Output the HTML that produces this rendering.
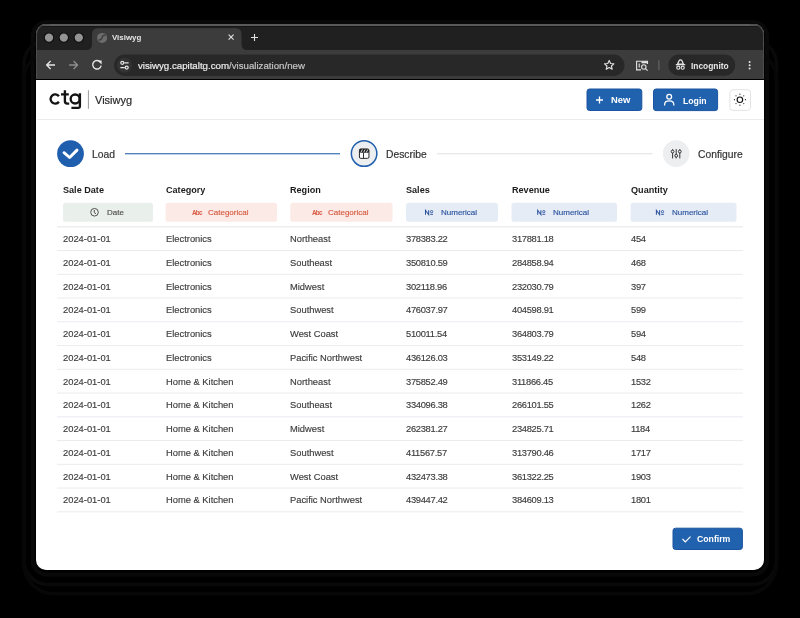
<!DOCTYPE html>
<html><head><meta charset="utf-8">
<style>
*{margin:0;padding:0;box-sizing:border-box}
html,body{width:800px;height:618px;background:#000;overflow:hidden;font-family:"Liberation Sans",sans-serif;position:relative}
body>div{will-change:transform}
.abs{position:absolute}
.ttl{position:absolute;left:112.1px;top:32.6px;font-size:7.9px;line-height:10px;font-weight:bold;color:#e6e6e6;white-space:nowrap}
.url{position:absolute;left:137.9px;top:59.9px;font-size:9.7px;line-height:11px;color:#ececec;white-space:nowrap;-webkit-text-stroke:0.2px currentColor}
.url span{color:#c4c4c4}
.inct{position:absolute;left:690.6px;top:60.5px;font-size:8.4px;line-height:10px;font-weight:bold;color:#e6e6e6;white-space:nowrap}
.hdrsep{position:absolute;left:36px;top:119px;width:728px;height:1px;background:#e8e8e8}
.logo{position:absolute;left:49px;top:85.7px;font-size:19.6px;line-height:22px;font-weight:bold;color:#141414;letter-spacing:0.7px;transform:scaleX(1.07);transform-origin:0 0}
.lsep{position:absolute;left:88px;top:90.2px;width:1px;height:18.6px;background:#9a9a9a}
.appname{position:absolute;left:95.2px;top:94.2px;font-size:11px;line-height:12px;color:#2a2a2a;-webkit-text-stroke:0.2px currentColor}
.btn{position:absolute;background:#1f5fad;border:1px solid #1a5298;border-radius:2.5px}
.btxt{position:absolute;font-size:8.9px;line-height:10px;font-weight:bold;color:#fff;white-space:nowrap}
.theme{position:absolute;left:729.4px;top:89.2px;width:21px;height:21.2px;border:1px solid #e4e4e4;border-radius:3px;background:#fff}
.stxt{position:absolute;top:148.8px;font-size:10.3px;line-height:12px;color:#333;white-space:nowrap;-webkit-text-stroke:0.2px currentColor}
.th{position:absolute;font-size:9.1px;line-height:11px;font-weight:bold;color:#1c1c1c;white-space:nowrap}
.badge{position:absolute;top:202.8px;height:19px;border-radius:2.5px;font-size:7.8px;line-height:19px;text-align:center;white-space:nowrap}
.badge .ico{font-size:7px;margin-right:8px}
.b0{background:#e9efea;color:#555}
.b1{background:#fbe9e5;color:#d6604a}
.b2{background:#e6ecf5;color:#2d56a0}
.hline{position:absolute;left:57px;width:686px;height:1px;background:#e9ecef}
.hline.dbl{background:#e3e5e8}
.cell{position:absolute;font-size:9.35px;line-height:11px;color:#3c3c3c;white-space:nowrap;-webkit-text-stroke:0.15px currentColor}
.btx{position:absolute;top:208px;font-size:8px;line-height:10px;white-space:nowrap;-webkit-text-stroke:0.15px currentColor}
.b0t{color:#4f4f4f}
.b1t{color:#d85a40}
.b2t{color:#2b54a0}
.ico1{position:absolute;top:208.9px;font-size:6.3px;line-height:7px;font-weight:bold;color:#d85a40;letter-spacing:-0.7px;white-space:nowrap;margin-left:0.8px}
.ico2{position:absolute;top:207.8px;font-size:8.6px;line-height:10px;color:#2b54a0;white-space:nowrap}

</style></head><body>
<svg class="abs" style="left:0;top:0" width="800" height="618" viewBox="0 0 800 618">
  <g fill="none" stroke="#090909">
    <rect x="32.7" y="22" width="734.3" height="552.5" rx="14" stroke-width="4"/>
    <rect x="24" y="40" width="752.5" height="544.5" rx="24" stroke-width="3.6"/>
    <rect x="24" y="50" width="752.5" height="543.7" rx="30" stroke-width="3.6" stroke="#070707"/>
  </g>
  <defs><clipPath id="wc"><rect x="36" y="24" width="728" height="546" rx="10" ry="10"/></clipPath></defs>
  <g clip-path="url(#wc)">
    <rect x="36" y="24" width="728" height="546" fill="#ffffff"/>
    <rect x="36" y="24" width="728" height="26" fill="#202020"/>
    <rect x="36" y="24" width="728" height="2" fill="#555555"/>
    <rect x="36" y="26" width="728" height="1" fill="#151515"/>
    <path d="M86 50 Q92 50 92 44 L92 34.3 Q92 28.3 98 28.3 L235.5 28.3 Q241.5 28.3 241.5 34.3 L241.5 44 Q241.5 50 247.5 50 Z" fill="#3c3c3c"/>
    <rect x="36" y="50" width="728" height="29" fill="#3c3c3c"/>
    <rect x="36" y="79" width="728" height="1" fill="#000"/>
  </g>
  <!-- traffic lights -->
  <clipPath id="topc"><rect x="0" y="0" width="800" height="79"/></clipPath><rect clip-path="url(#topc)" x="36.5" y="24.5" width="727" height="545" rx="10" fill="none" stroke="#4d4d4d" stroke-width="1"/>
  <rect x="50" y="24" width="700" height="2" fill="#5a5a5a"/>
  <g fill="#949494" stroke="#0e0e0e" stroke-width="1.1">
    <circle cx="49" cy="37.6" r="4.75"/>
    <circle cx="63.8" cy="37.6" r="4.75"/>
    <circle cx="78.8" cy="37.6" r="4.75"/>
  </g>
  <!-- favicon -->
  <circle cx="102.1" cy="37.9" r="5" fill="#6c6c6c"/>
  <path d="M105.6 35.3 Q102.6 34.9 102.2 37.3 Q101.9 39.6 98.6 40.3" stroke="#3d3d3d" stroke-width="1.4" fill="none"/>
  <!-- close x -->
  <path d="M228.6 34.6 L233.6 39.6 M233.6 34.6 L228.6 39.6" stroke="#e3e3e3" stroke-width="1.1"/>
  <!-- plus -->
  <path d="M254.5 34 L254.5 41 M251 37.5 L258 37.5" stroke="#e3e3e3" stroke-width="1.1"/>
  <!-- back/forward/reload -->
  <path d="M55 65 L46.8 65 M50.6 61.1 L46.7 65 L50.6 68.9" stroke="#e6e6e6" stroke-width="1.35" fill="none"/>
  <path d="M69.2 65 L77.4 65 M73.6 61.1 L77.5 65 L73.6 68.9" stroke="#8e8e8e" stroke-width="1.35" fill="none"/>
  <path d="M100.4 62.2 A4.25 4.25 0 1 0 101.15 65.6" stroke="#e6e6e6" stroke-width="1.35" fill="none"/>
  <path d="M97.6 60.4 L101.6 60.4 L101.6 64.4 Z" fill="#e6e6e6"/>
  <!-- address pill -->
  <rect x="114" y="54.5" width="510.5" height="21.5" rx="10.75" fill="#282828"/>
  <circle cx="124.5" cy="65.2" r="7.5" fill="#333333"/>
  <g stroke="#e6e6e6" stroke-width="1.25" fill="none">
    <circle cx="122.3" cy="62.8" r="1.5"/>
    <path d="M124.3 62.8 L128.6 62.8 M120.4 67.6 L124.7 67.6"/>
    <circle cx="126.7" cy="67.6" r="1.5"/>
  </g>
  <!-- star -->
  <path d="M609.2 60.4 L610.6 63.5 L613.9 63.8 L611.4 66 L612.2 69.3 L609.2 67.6 L606.2 69.3 L607 66 L604.5 63.8 L607.8 63.5 Z" stroke="#e3e3e3" stroke-width="1.1" fill="none" stroke-linejoin="round"/>
  <!-- tab search -->
  <g stroke="#e3e3e3" stroke-width="1.1" fill="none">
    <path d="M641 69.9 L636.6 69.9 L636.6 61.3 L647.5 61.3 L647.5 64"/>
    <path d="M639.2 63.5 L639.2 67.5"/>
    <circle cx="643.8" cy="67" r="2.2"/>
    <path d="M645.4 68.6 L647.6 70.6"/>
  </g>
  <rect x="641.5" y="61.3" width="6" height="2" fill="#e3e3e3"/>
  <rect x="658.4" y="60.3" width="1" height="9.7" fill="#6a6a6a"/>
  <!-- incognito pill -->
  <rect x="668.4" y="54.5" width="66.9" height="21.3" rx="10.6" fill="#282828"/>
  <path d="M677.6 64 L679.2 60.5 Q679.5 59.9 680.5 59.9 Q681.5 59.9 681.8 60.5 L683.4 64 Z" stroke="#e6e6e6" stroke-width="1.25" fill="none" stroke-linejoin="round"/>
  <rect x="675.7" y="64" width="9.6" height="1.25" rx="0.6" fill="#e6e6e6"/>
  <g stroke="#e6e6e6" stroke-width="1.1" fill="none">
    <circle cx="678.3" cy="67.7" r="1.55"/>
    <circle cx="682.7" cy="67.7" r="1.55"/>
  </g>
  <!-- menu dots -->
  <g fill="#e3e3e3">
    <circle cx="749.6" cy="61.9" r="1"/>
    <circle cx="749.6" cy="65.2" r="1"/>
    <circle cx="749.6" cy="68.5" r="1"/>
  </g>
</svg>
<div class="ttl">Visiwyg</div>
<div class="url">visiwyg.capitaltg.com<span>/visualization/new</span></div>
<div class="inct">Incognito</div>

<svg class="abs" style="left:0;top:0" width="800" height="618" viewBox="0 0 800 618">
  <rect x="37" y="119" width="727" height="1" fill="#eaecef"/>
  <rect x="87.9" y="90.2" width="1" height="18.6" fill="#9a9a9a"/>
  <g stroke="#141414" stroke-width="2.35" fill="none">
    <path d="M58.9 96.3 A4.6 4.6 0 1 0 58.9 101.7"/>
    <path d="M64.9 90.2 L64.9 101.3 Q64.9 103.6 67.2 103.6 L69.2 103.6 M61 94.3 L68.8 94.3"/>
    <circle cx="75.15" cy="98.95" r="4.5"/>
    <path d="M79.9 93.2 L79.9 106.6 Q79.9 107.8 78.7 107.8 L71.4 107.8"/>
  </g>
  <!-- New -->
  <rect x="587" y="89" width="54.8" height="21.5" rx="2.5" fill="#2162ae" stroke="#1a54a2" stroke-width="1"/>
  <path d="M599.5 96.5 L599.5 103.5 M596 100 L603 100" stroke="#fff" stroke-width="1.3"/>
  <!-- Login -->
  <rect x="653.5" y="89" width="64.1" height="21.6" rx="2.5" fill="#2162ae" stroke="#1a54a2" stroke-width="1"/>
  <circle cx="669.2" cy="96.7" r="2.4" stroke="#fff" stroke-width="1.3" fill="none"/>
  <path d="M664.6 105.6 L664.6 104.6 Q664.6 100.8 669.2 100.8 Q673.8 100.8 673.8 104.6 L673.8 105.6" stroke="#fff" stroke-width="1.3" fill="none"/>
  <!-- theme -->
  <rect x="729.9" y="89.7" width="20.6" height="20.6" rx="3" fill="#fff" stroke="#e3e3e3" stroke-width="1"/>
  <circle cx="739.9" cy="99.7" r="2.75" stroke="#111" stroke-width="1.15" fill="none"/>
  <g fill="#222"><circle cx="745.40" cy="99.70" r="0.6"/><circle cx="743.79" cy="103.59" r="0.6"/><circle cx="739.90" cy="105.20" r="0.6"/><circle cx="736.01" cy="103.59" r="0.6"/><circle cx="734.40" cy="99.70" r="0.6"/><circle cx="736.01" cy="95.81" r="0.6"/><circle cx="739.90" cy="94.20" r="0.6"/><circle cx="743.79" cy="95.81" r="0.6"/></g>
  <!-- stepper -->
  <rect x="125" y="153.2" width="215" height="1.1" fill="#2a63aa"/>
  <rect x="437" y="153.2" width="215.5" height="1.1" fill="#e3e3e3"/>
  <circle cx="70.5" cy="153.65" r="13.4" fill="#1f5fad"/>
  <path d="M64 152.7 L69.6 157.5 L77 150.1" stroke="#fff" stroke-width="2.9" fill="none" stroke-linecap="round" stroke-linejoin="round"/>
  <circle cx="364.1" cy="153.6" r="12.75" fill="#eceef0" stroke="#1f5fad" stroke-width="1.5"/>
  <rect x="359.45" y="148.95" width="9.5" height="9.4" rx="1.3" fill="#fff" stroke="#1e1e1e" stroke-width="0.95"/>
  <rect x="359.45" y="148.95" width="9.5" height="3.7" rx="1" fill="#1e1e1e"/>
  <path d="M360.9 152.4 L362.4 149.5 M363.6 152.4 L365.1 149.5 M366.3 152.4 L367.8 149.5" stroke="#fff" stroke-width="0.85"/>
  <path d="M363.5 152.5 L363.5 158.3" stroke="#1e1e1e" stroke-width="0.9"/>
  <circle cx="676.15" cy="153.65" r="13.3" fill="#eceef0"/>
  <g stroke="#333" stroke-width="1" fill="none">
    <path d="M672.6 149.1 L672.6 150.1 M672.6 153 L672.6 158.4 M676.2 149.1 L676.2 154.3 M676.2 157.2 L676.2 158.4 M679.8 149.1 L679.8 150.1 M679.8 153 L679.8 158.4"/>
    <circle cx="672.6" cy="151.55" r="1.4"/>
    <circle cx="676.2" cy="155.75" r="1.4"/>
    <circle cx="679.8" cy="151.55" r="1.4"/>
  </g>
  <!-- confirm -->
  <rect x="673" y="528.2" width="69.4" height="21.3" rx="2.5" fill="#2162ae" stroke="#1a54a2" stroke-width="1"/>
  <path d="M682.5 539 L685.3 541.8 L690.5 536.6" stroke="#fff" stroke-width="1.2" fill="none"/>
  <rect x="63.00" y="202.8" width="90.00" height="19" rx="2.5" fill="#e9efea"/>
<circle cx="94.50" cy="212.25" r="3.8" stroke="#4a4a4a" stroke-width="0.95" fill="none"/><path d="M94.30 210 L94.30 212.6 L96.00 213.8" stroke="#4a4a4a" stroke-width="0.95" fill="none"/>
<rect x="165.60" y="202.8" width="111.40" height="19" rx="2.5" fill="#fbeae6"/>
<rect x="290.30" y="202.8" width="102.20" height="19" rx="2.5" fill="#fbeae6"/>
<rect x="406.00" y="202.8" width="92.00" height="19" rx="2.5" fill="#e6ecf5"/>
<g stroke="#2b54a0" fill="none"><path d="M425.50 214.7 L425.50 210.3 L428.70 214.7 L428.70 210.3" stroke-width="1.05" stroke-linejoin="miter"/><circle cx="431.60" cy="211.65" r="1.15" stroke-width="0.9"/></g><rect x="430.15" y="213.85" width="2.9" height="0.9" fill="#2b54a0"/>
<rect x="511.50" y="202.8" width="105.50" height="19" rx="2.5" fill="#e6ecf5"/>
<g stroke="#2b54a0" fill="none"><path d="M537.70 214.7 L537.70 210.3 L540.90 214.7 L540.90 210.3" stroke-width="1.05" stroke-linejoin="miter"/><circle cx="543.80" cy="211.65" r="1.15" stroke-width="0.9"/></g><rect x="542.35" y="213.85" width="2.9" height="0.9" fill="#2b54a0"/>
<rect x="630.60" y="202.8" width="105.90" height="19" rx="2.5" fill="#e6ecf5"/>
<g stroke="#2b54a0" fill="none"><path d="M656.40 214.7 L656.40 210.3 L659.60 214.7 L659.60 210.3" stroke-width="1.05" stroke-linejoin="miter"/><circle cx="662.50" cy="211.65" r="1.15" stroke-width="0.9"/></g><rect x="661.05" y="213.85" width="2.9" height="0.9" fill="#2b54a0"/>
<rect x="57" y="226.30" width="686" height="1" fill="#e3e5e8"/>
<rect x="57" y="250.05" width="686" height="1" fill="#e9ecef"/>
<rect x="57" y="273.80" width="686" height="1" fill="#e9ecef"/>
<rect x="57" y="297.55" width="686" height="1" fill="#e9ecef"/>
<rect x="57" y="321.30" width="686" height="1" fill="#e9ecef"/>
<rect x="57" y="345.05" width="686" height="1" fill="#e9ecef"/>
<rect x="57" y="368.80" width="686" height="1" fill="#e9ecef"/>
<rect x="57" y="392.55" width="686" height="1" fill="#e9ecef"/>
<rect x="57" y="416.30" width="686" height="1" fill="#e9ecef"/>
<rect x="57" y="440.05" width="686" height="1" fill="#e9ecef"/>
<rect x="57" y="463.80" width="686" height="1" fill="#e9ecef"/>
<rect x="57" y="487.55" width="686" height="1" fill="#e9ecef"/>
<rect x="57" y="511.30" width="686" height="1" fill="#e9ecef"/>
</svg>
<div class="appname">Visiwyg</div>
<div class="btxt" style="left:610.8px;top:95.2px;font-size:9.4px">New</div>
<div class="btxt" style="left:682.9px;top:95.5px;font-size:8.7px">Login</div>
<div class="btxt" style="left:697.3px;top:534.2px;font-size:8.7px">Confirm</div>
<div class="stxt" style="left:92.1px">Load</div>
<div class="stxt" style="left:385.7px">Describe</div>
<div class="stxt" style="left:697.5px">Configure</div>

<div class="th" style="left:63.00px;top:185.1px">Sale Date</div>
<div class="th" style="left:165.60px;top:185.1px">Category</div>
<div class="th" style="left:290.30px;top:185.1px">Region</div>
<div class="th" style="left:406.00px;top:185.1px">Sales</div>
<div class="th" style="left:511.50px;top:185.1px">Revenue</div>
<div class="th" style="left:630.60px;top:185.1px">Quantity</div>
<div class="btx b0t" style="left:106.75px">Date</div>
<div class="ico1" style="left:191.00px">Abc</div>
<div class="btx b1t" style="left:207.90px">Categorical</div>
<div class="ico1" style="left:311.00px">Abc</div>
<div class="btx b1t" style="left:327.60px">Categorical</div>
<div class="btx b2t" style="left:440.80px">Numerical</div>
<div class="btx b2t" style="left:552.50px">Numerical</div>
<div class="btx b2t" style="left:671.90px">Numerical</div>
<div class="cell" style="left:63.00px;top:234.00px">2024-01-01</div>
<div class="cell" style="left:165.60px;top:234.00px">Electronics</div>
<div class="cell" style="left:290.30px;top:234.00px">Northeast</div>
<div class="cell" style="left:406.00px;top:234.00px;letter-spacing:-0.3px">378383.22</div>
<div class="cell" style="left:511.50px;top:234.00px;letter-spacing:-0.3px">317881.18</div>
<div class="cell" style="left:630.60px;top:234.00px;letter-spacing:-0.3px">454</div>
<div class="cell" style="left:63.00px;top:257.75px">2024-01-01</div>
<div class="cell" style="left:165.60px;top:257.75px">Electronics</div>
<div class="cell" style="left:290.30px;top:257.75px">Southeast</div>
<div class="cell" style="left:406.00px;top:257.75px;letter-spacing:-0.3px">350810.59</div>
<div class="cell" style="left:511.50px;top:257.75px;letter-spacing:-0.3px">284858.94</div>
<div class="cell" style="left:630.60px;top:257.75px;letter-spacing:-0.3px">468</div>
<div class="cell" style="left:63.00px;top:281.50px">2024-01-01</div>
<div class="cell" style="left:165.60px;top:281.50px">Electronics</div>
<div class="cell" style="left:290.30px;top:281.50px">Midwest</div>
<div class="cell" style="left:406.00px;top:281.50px;letter-spacing:-0.3px">302118.96</div>
<div class="cell" style="left:511.50px;top:281.50px;letter-spacing:-0.3px">232030.79</div>
<div class="cell" style="left:630.60px;top:281.50px;letter-spacing:-0.3px">397</div>
<div class="cell" style="left:63.00px;top:305.25px">2024-01-01</div>
<div class="cell" style="left:165.60px;top:305.25px">Electronics</div>
<div class="cell" style="left:290.30px;top:305.25px">Southwest</div>
<div class="cell" style="left:406.00px;top:305.25px;letter-spacing:-0.3px">476037.97</div>
<div class="cell" style="left:511.50px;top:305.25px;letter-spacing:-0.3px">404598.91</div>
<div class="cell" style="left:630.60px;top:305.25px;letter-spacing:-0.3px">599</div>
<div class="cell" style="left:63.00px;top:329.00px">2024-01-01</div>
<div class="cell" style="left:165.60px;top:329.00px">Electronics</div>
<div class="cell" style="left:290.30px;top:329.00px">West Coast</div>
<div class="cell" style="left:406.00px;top:329.00px;letter-spacing:-0.3px">510011.54</div>
<div class="cell" style="left:511.50px;top:329.00px;letter-spacing:-0.3px">364803.79</div>
<div class="cell" style="left:630.60px;top:329.00px;letter-spacing:-0.3px">594</div>
<div class="cell" style="left:63.00px;top:352.75px">2024-01-01</div>
<div class="cell" style="left:165.60px;top:352.75px">Electronics</div>
<div class="cell" style="left:290.30px;top:352.75px">Pacific Northwest</div>
<div class="cell" style="left:406.00px;top:352.75px;letter-spacing:-0.3px">436126.03</div>
<div class="cell" style="left:511.50px;top:352.75px;letter-spacing:-0.3px">353149.22</div>
<div class="cell" style="left:630.60px;top:352.75px;letter-spacing:-0.3px">548</div>
<div class="cell" style="left:63.00px;top:376.50px">2024-01-01</div>
<div class="cell" style="left:165.60px;top:376.50px">Home &amp; Kitchen</div>
<div class="cell" style="left:290.30px;top:376.50px">Northeast</div>
<div class="cell" style="left:406.00px;top:376.50px;letter-spacing:-0.3px">375852.49</div>
<div class="cell" style="left:511.50px;top:376.50px;letter-spacing:-0.3px">311866.45</div>
<div class="cell" style="left:630.60px;top:376.50px;letter-spacing:-0.3px">1532</div>
<div class="cell" style="left:63.00px;top:400.25px">2024-01-01</div>
<div class="cell" style="left:165.60px;top:400.25px">Home &amp; Kitchen</div>
<div class="cell" style="left:290.30px;top:400.25px">Southeast</div>
<div class="cell" style="left:406.00px;top:400.25px;letter-spacing:-0.3px">334096.38</div>
<div class="cell" style="left:511.50px;top:400.25px;letter-spacing:-0.3px">266101.55</div>
<div class="cell" style="left:630.60px;top:400.25px;letter-spacing:-0.3px">1262</div>
<div class="cell" style="left:63.00px;top:424.00px">2024-01-01</div>
<div class="cell" style="left:165.60px;top:424.00px">Home &amp; Kitchen</div>
<div class="cell" style="left:290.30px;top:424.00px">Midwest</div>
<div class="cell" style="left:406.00px;top:424.00px;letter-spacing:-0.3px">262381.27</div>
<div class="cell" style="left:511.50px;top:424.00px;letter-spacing:-0.3px">234825.71</div>
<div class="cell" style="left:630.60px;top:424.00px;letter-spacing:-0.3px">1184</div>
<div class="cell" style="left:63.00px;top:447.75px">2024-01-01</div>
<div class="cell" style="left:165.60px;top:447.75px">Home &amp; Kitchen</div>
<div class="cell" style="left:290.30px;top:447.75px">Southwest</div>
<div class="cell" style="left:406.00px;top:447.75px;letter-spacing:-0.3px">411567.57</div>
<div class="cell" style="left:511.50px;top:447.75px;letter-spacing:-0.3px">313790.46</div>
<div class="cell" style="left:630.60px;top:447.75px;letter-spacing:-0.3px">1717</div>
<div class="cell" style="left:63.00px;top:471.50px">2024-01-01</div>
<div class="cell" style="left:165.60px;top:471.50px">Home &amp; Kitchen</div>
<div class="cell" style="left:290.30px;top:471.50px">West Coast</div>
<div class="cell" style="left:406.00px;top:471.50px;letter-spacing:-0.3px">432473.38</div>
<div class="cell" style="left:511.50px;top:471.50px;letter-spacing:-0.3px">361322.25</div>
<div class="cell" style="left:630.60px;top:471.50px;letter-spacing:-0.3px">1903</div>
<div class="cell" style="left:63.00px;top:495.25px">2024-01-01</div>
<div class="cell" style="left:165.60px;top:495.25px">Home &amp; Kitchen</div>
<div class="cell" style="left:290.30px;top:495.25px">Pacific Northwest</div>
<div class="cell" style="left:406.00px;top:495.25px;letter-spacing:-0.3px">439447.42</div>
<div class="cell" style="left:511.50px;top:495.25px;letter-spacing:-0.3px">384609.13</div>
<div class="cell" style="left:630.60px;top:495.25px;letter-spacing:-0.3px">1801</div>


</body></html>
